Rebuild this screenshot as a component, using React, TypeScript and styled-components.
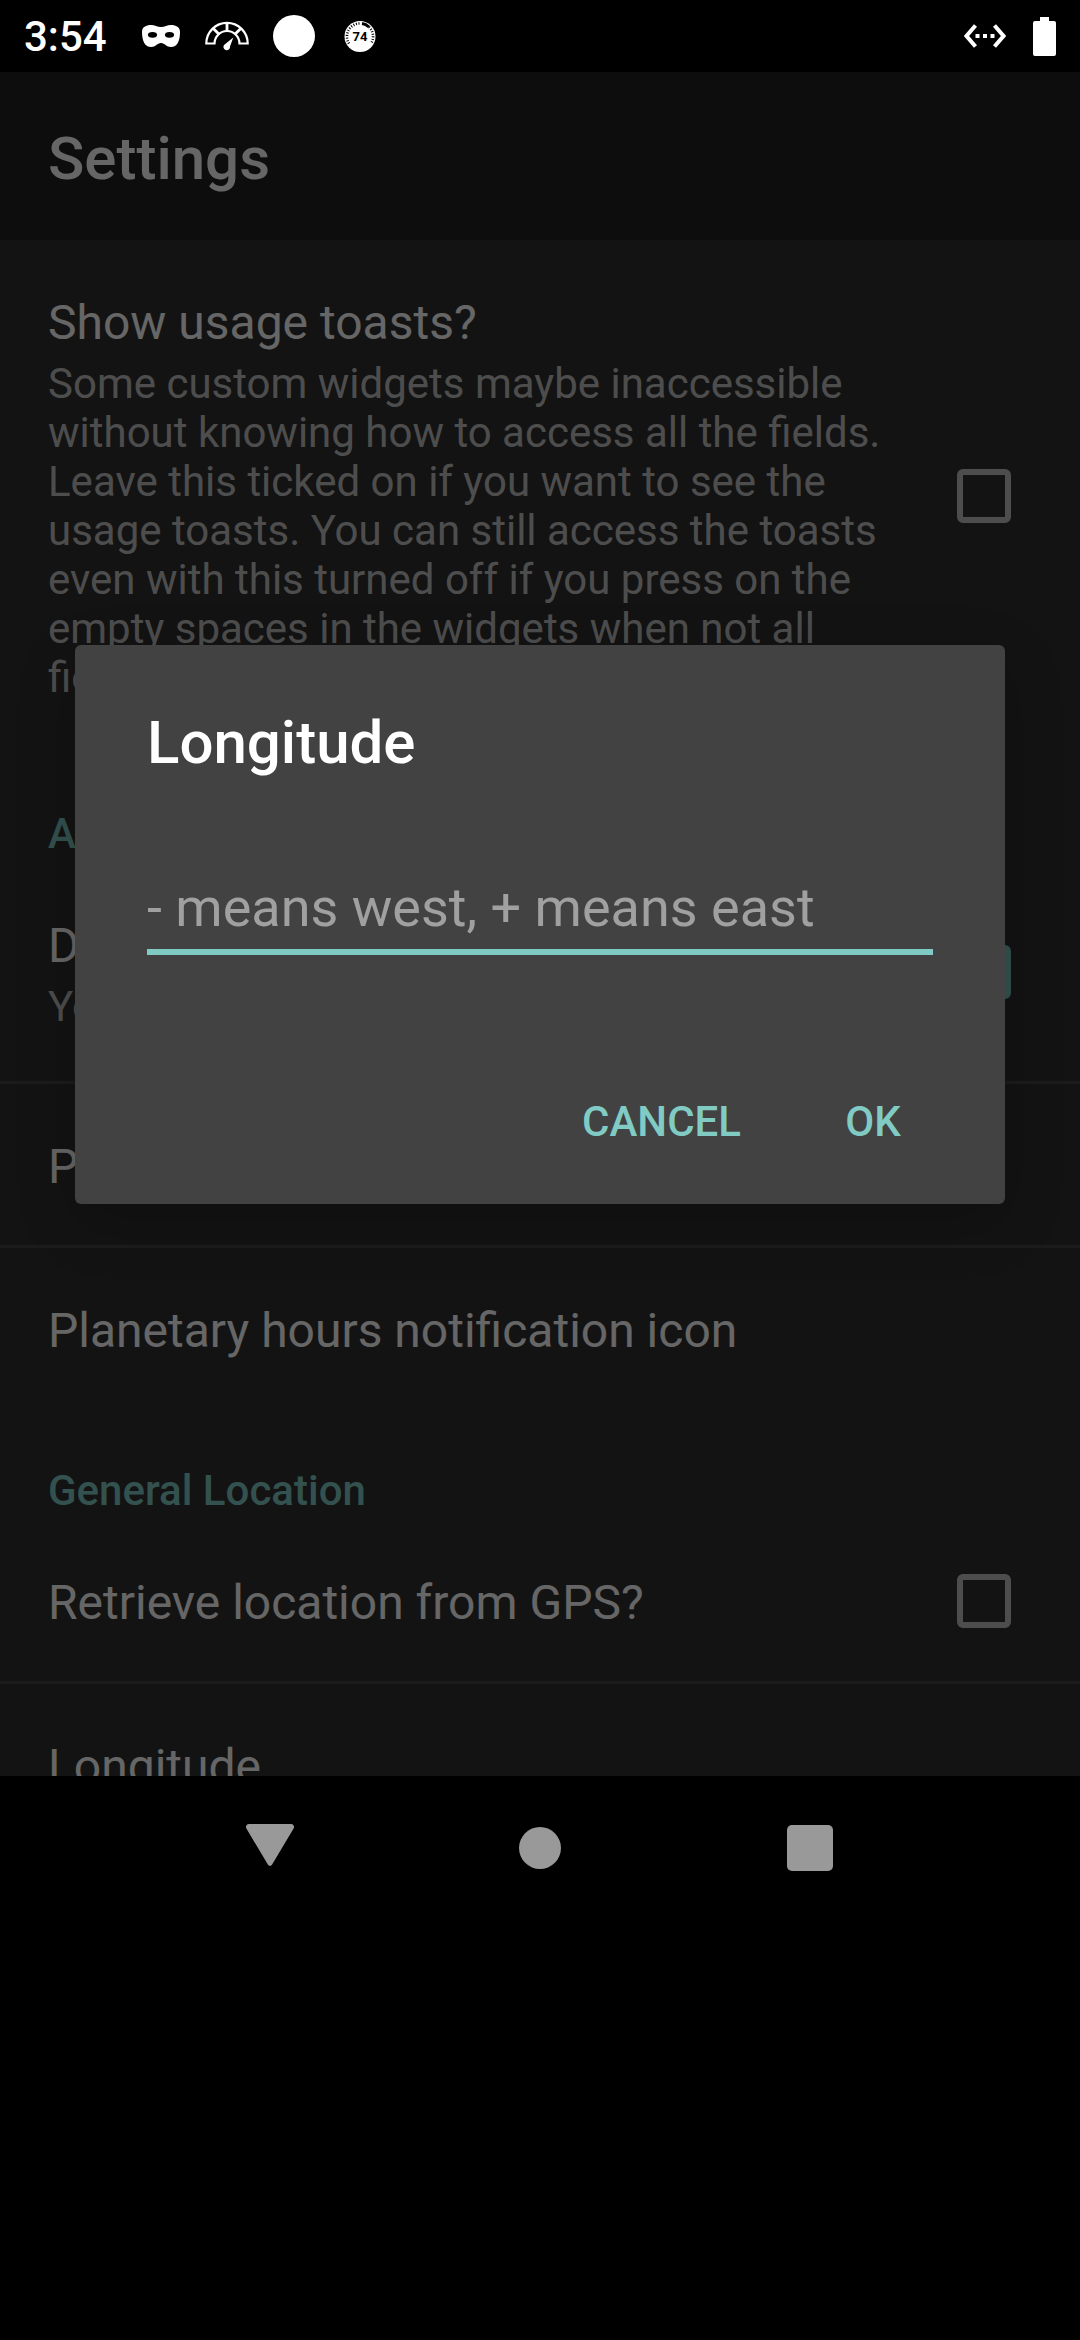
import React, { useState } from "react";
import styled, { createGlobalStyle } from "styled-components";

const GlobalStyle = createGlobalStyle`
  *, *::before, *::after { box-sizing: border-box; }
  body {
    margin: 0;
    background: #000;
    color: #fff;
    font-family: Roboto, "Noto Sans", sans-serif;
  }
`;

const Screen = styled.div`
  display: flex;
  flex-direction: column;
  height: 100vh;
  padding-bottom: 420px;
  background: #000;
`;

const StatusBar = styled.header`
  display: flex;
  flex: none;
  align-items: center;
  justify-content: space-between;
  height: 72px;
  padding: 0 24px;
`;

const StatusGroup = styled.div<{ $gap: number }>`
  display: flex;
  align-items: center;
  gap: ${(p) => p.$gap}px;
`;

const Clock = styled.time`
  margin-right: 10px;
  padding-top: 2px;
  font-size: 42px;
  font-weight: 500;
  line-height: 48px;
`;

const Icon = styled.svg`
  display: block;
  flex: none;
`;

const AppWindow = styled.div`
  position: relative;
  flex: 1;
  min-height: 0;
  overflow: hidden;
  background: #303030;
`;

const AppBar = styled.div`
  display: flex;
  align-items: center;
  height: 168px;
  padding: 0 48px;
  background: #212121;
`;

const AppTitle = styled.h1`
  margin: 0;
  padding-top: 6px;
  font-size: 60px;
  font-weight: 500;
  line-height: 72px;
`;

const Category = styled.h2`
  margin: 0;
  padding: 57px 48px 5px;
  color: #80cbc4;
  font-size: 42px;
  font-weight: 500;
  line-height: 49px;
`;

const Row = styled.label`
  display: flex;
  align-items: center;
  gap: 48px;
  width: 100%;
  padding: 0 69px 0 48px;
  border: 0;
  background: none;
  color: #fff;
  font: inherit;
  text-align: left;
`;

const RowText = styled.span`
  flex: 1;
  min-width: 0;
  padding: 52px 0 47px;
`;

const RowTitle = styled.span`
  display: block;
  font-size: 48px;
  line-height: 62px;
`;

const RowSummary = styled.span`
  display: block;
  padding: 5px 0 3px;
  color: #c1c1c1;
  font-size: 42px;
  line-height: 49px;
`;

const Divider = styled.hr`
  height: 3px;
  margin: 0;
  border: 0;
  background: #464646;
`;

const CheckBox = styled.input`
  appearance: none;
  flex: none;
  width: 54px;
  height: 54px;
  margin: 0;
  border: 6px solid #c1c1c1;
  border-radius: 6px;

  &:checked {
    border-color: #80cbc4;
    background: #80cbc4;
  }
`;

const Scrim = styled.div`
  position: absolute;
  inset: 0;
  display: flex;
  align-items: center;
  padding: 0 75px;
  background: rgba(0, 0, 0, 0.6);
`;

const Dialog = styled.form`
  flex: 1;
  min-width: 0;
  border-radius: 6px;
  background: #424242;
  box-shadow: 0 18px 60px rgba(0, 0, 0, 0.2);
`;

const DialogTitle = styled.label`
  display: block;
  padding: 61px 72px 0;
  font-size: 60px;
  font-weight: 500;
  line-height: 74px;
`;

const Field = styled.div`
  padding: 87px 72px 0;
`;

const TextInput = styled.input`
  display: block;
  width: 100%;
  height: 88px;
  padding: 0;
  border: 0;
  border-bottom: 6px solid #80cbc4;
  border-radius: 0;
  outline: none;
  background: none;
  color: #fff;
  font: 400 54px/64px Roboto, "Noto Sans", sans-serif;

  &::placeholder {
    color: #a0a0a0;
    opacity: 1;
  }
`;

const Actions = styled.div`
  display: flex;
  justify-content: flex-end;
  padding: 95px 36px 10px;
`;

const ActionButton = styled.button`
  min-width: 192px;
  height: 144px;
  padding: 0 36px;
  border: 0;
  background: none;
  color: #80cbc4;
  font: 500 42px/50px Roboto, "Noto Sans", sans-serif;
`;

const NavBar = styled.nav`
  display: grid;
  flex: none;
  grid-template-columns: repeat(3, 1fr);
  height: 144px;
  padding: 0 12.5%;
`;

const NavButton = styled.button`
  display: grid;
  place-items: center;
  padding: 0;
  border: 0;
  background: none;
  color: #999;
`;

type PreferenceProps = { title: string; summary?: string };

function Preference({ title, summary }: PreferenceProps) {
  return (
    <Row as="button" type="button">
      <RowText>
        <RowTitle>{title}</RowTitle>
        {summary && <RowSummary>{summary}</RowSummary>}
      </RowText>
    </Row>
  );
}

function CheckPreference({ title, summary, initial = false }: PreferenceProps & { initial?: boolean }) {
  const [on, setOn] = useState(initial);
  return (
    <Row>
      <RowText>
        <RowTitle>{title}</RowTitle>
        {summary && <RowSummary>{summary}</RowSummary>}
      </RowText>
      <CheckBox type="checkbox" checked={on} onChange={(e) => setOn(e.target.checked)} />
    </Row>
  );
}

function MaskIcon() {
  return (
    <Icon width="40" height="24" viewBox="0 0 40 24" fill="#fff">
      <path d="M1 8C1 3 5 1 10 1c4 0 6 2 10 2s6-2 10-2c5 0 9 2 9 7 0 9-3 15-9 15-5 0-6-4-10-4s-5 4-10 4C4 23 1 17 1 8z" />
      <ellipse cx="11.500" cy="10.800" rx="4.600" ry="2.900" fill="#000" />
      <ellipse cx="28.500" cy="10.800" rx="4.600" ry="2.900" fill="#000" />
    </Icon>
  );
}

function GaugeIcon() {
  return (
    <Icon width="44" height="30" viewBox="0 0 44 30" fill="none" stroke="#fff" strokeWidth="2.200">
      <path d="M1.300 22.500A20.700 20.700 0 0 1 42.700 22.500H34.500A12.500 12.500 0 0 0 9.500 22.500Z" />
      <path d="M22 2v8M8.300 7.500l5.500 5.500M35.700 7.500l-5.500 5.500" strokeWidth="2.800" />
      <path d="M28.300 16.500 19.600 23.500a3.300 3.300 0 1 0 5.400 2z" fill="#fff" stroke="none" />
    </Icon>
  );
}

function DiscIcon() {
  return (
    <Icon width="42" height="42" viewBox="0 0 42 42">
      <circle cx="21" cy="21" r="21" fill="#fff" />
    </Icon>
  );
}

function TemperatureIcon() {
  return (
    <Icon width="42" height="32" viewBox="-5 0 42 32">
      <circle cx="16" cy="16.500" r="15.500" fill="#fff" />
      <path d="M5 23.500A13 13 0 0 1 16 3.500M25 7A13 13 0 0 1 27 23.500" fill="none" stroke="#000" strokeWidth="2.600" strokeDasharray="1 1.600" />
      <path d="M18 3.500A13 13 0 0 1 25 7" fill="none" stroke="#000" strokeWidth="3" />
      <text x="16" y="21" fill="#000" fontFamily="Roboto, sans-serif" fontSize="13" fontWeight="700" textAnchor="middle">
        74
      </text>
    </Icon>
  );
}

function EthernetIcon() {
  return (
    <Icon width="42" height="24" viewBox="0 0 42 24">
      <path d="M11.500 1.500 2.500 12l9 10.500M30.500 1.500l9 10.500-9 10.500" fill="none" stroke="#fff" strokeWidth="4" />
      <path d="M11.500 10h4v4h-4zM19 10h4v4h-4zM26.500 10h4v4h-4z" fill="#fff" />
    </Icon>
  );
}

function BatteryIcon() {
  return (
    <Icon width="23" height="39" viewBox="0 0 23 39">
      <path d="M7 0h9v4h5a2 2 0 0 1 2 2v31a2 2 0 0 1-2 2H2a2 2 0 0 1-2-2V6a2 2 0 0 1 2-2h5z" fill="#fff" />
    </Icon>
  );
}

export default function App() {
  const [longitude, setLongitude] = useState("");
  return (
    <Screen>
      <GlobalStyle />
      <StatusBar>
        <StatusGroup $gap={24}>
          <Clock>3:54</Clock>
          <MaskIcon />
          <GaugeIcon />
          <DiscIcon />
          <TemperatureIcon />
        </StatusGroup>
        <StatusGroup $gap={27}>
          <EthernetIcon />
          <BatteryIcon />
        </StatusGroup>
      </StatusBar>

      <AppWindow>
        <AppBar>
          <AppTitle>Settings</AppTitle>
        </AppBar>
        <CheckPreference
          title="Show usage toasts?"
          summary="Some custom widgets maybe inaccessible without knowing how to access all the fields. Leave this ticked on if you want to see the usage toasts. You can still access the toasts even with this turned off if you press on the empty spaces in the widgets when not all fields are showing."
        />
        <Category>App Notifications</Category>
        <CheckPreference title="Display notification?" summary="You can turn this off" initial />
        <Divider />
        <Preference title="Planetary hours" />
        <Divider />
        <Preference title="Planetary hours notification icon" />
        <Category>General Location</Category>
        <CheckPreference title="Retrieve location from GPS?" />
        <Divider />
        <Preference title="Longitude" />

        <Scrim>
          <Dialog role="dialog" aria-labelledby="dialog-title" onSubmit={(e) => e.preventDefault()}>
            <DialogTitle id="dialog-title" htmlFor="longitude">
              Longitude
            </DialogTitle>
            <Field>
              <TextInput
                id="longitude"
                type="text"
                placeholder="- means west, + means east"
                value={longitude}
                onChange={(e) => setLongitude(e.target.value)}
              />
            </Field>
            <Actions>
              <ActionButton type="button">CANCEL</ActionButton>
              <ActionButton type="submit">OK</ActionButton>
            </Actions>
          </Dialog>
        </Scrim>
      </AppWindow>

      <NavBar>
        <NavButton type="button" aria-label="Back">
          <Icon width="48" height="48" viewBox="0 0 48 48">
            <path d="M3 0h42a3 3 0 0 1 2.600 4.500L26 40.800a2.300 2.300 0 0 1-4 0L.4 4.500A3 3 0 0 1 3 0z" fill="currentColor" />
          </Icon>
        </NavButton>
        <NavButton type="button" aria-label="Home">
          <Icon width="42" height="42" viewBox="0 0 42 42">
            <circle cx="21" cy="21" r="21" fill="currentColor" />
          </Icon>
        </NavButton>
        <NavButton type="button" aria-label="Recent apps">
          <Icon width="46" height="46" viewBox="0 0 46 46">
            <rect width="46" height="46" rx="5" fill="currentColor" />
          </Icon>
        </NavButton>
      </NavBar>
    </Screen>
  );
}
